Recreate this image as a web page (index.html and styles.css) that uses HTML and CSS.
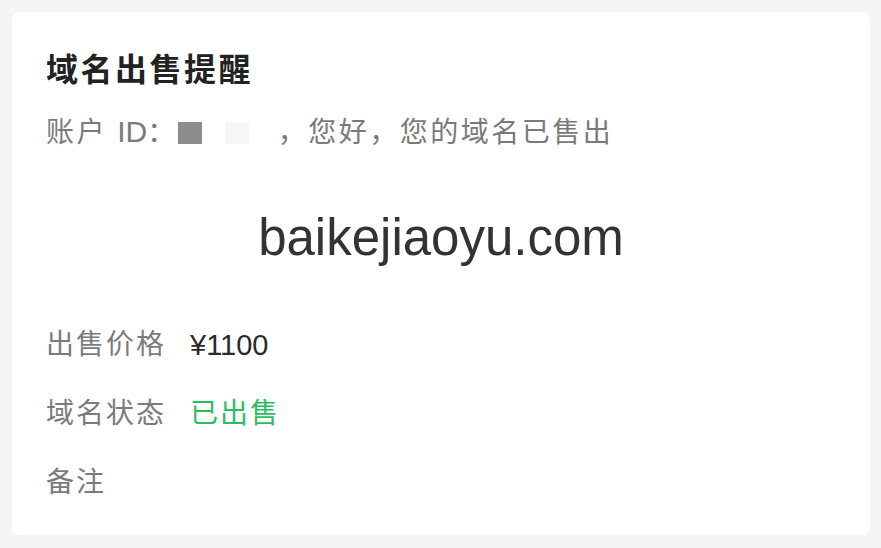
FILE: index.html
```html
<!DOCTYPE html>
<html>
<head>
<meta charset="utf-8">
<title>域名出售提醒</title>
<link rel="stylesheet" href="styles.css">
</head>
<body>
<div class="card">
    <h3 class="title">域名出售提醒</h3>
    <div class="greeting">账户 <span class="latin">ID</span>：<span class="mask dark"></span><span class="mask light"></span>，您好，您的域名已售出</div>
    <div class="domain">baikejiaoyu.com</div>
    <div class="row"><span class="label">出售价格</span><span class="value">¥1100</span></div>
    <div class="row"><span class="label">域名状态</span><span class="value sold">已出售</span></div>
    <div class="row"><span class="label">备注</span></div>
</div>
</body>
</html>
```

FILE: styles.css
```css
html, body {
    margin : 0;
    height : 100%;
    background-color : #f4f5f5;
}
body {
    box-sizing : border-box;
    padding : 12px 11px 13px 12px;
    font-family : "Liberation Sans", "Noto Sans CJK SC", sans-serif;
}
.card {
    height : 100%;
    box-sizing : border-box;
    background-color : #ffffff;
    border-radius : 7px;
    padding : 38px 34px 0 34px;
}
.title {
    margin : 0;
    font-size : 32px;
    line-height : 40px;
    font-weight : bold;
    letter-spacing : 2.5px;
    color : #222222;
}
.greeting {
    margin-top : 22px;
    font-size : 28px;
    line-height : 40px;
    letter-spacing : 2.5px;
    color : #7a7a7a;
}
.greeting .latin {
    font-size : 30px;
    letter-spacing : 0;
}
.mask {
    display : inline-block;
    width : 24px;
    height : 22px;
    vertical-align : -2px;
}
.mask.dark {
    background-color : #8c8c8c;
    margin-left : 0;
}
.mask.light {
    background-color : #f6f6f6;
    margin : 0 29px 0 23px;
}
.domain {
    margin-top : 55px;
    text-align : center;
    font-size : 51px;
    line-height : 60px;
    color : #333333;
}
.row {
    display : grid;
    grid-template-columns : 144px 1fr;
    margin-top : 29px;
    font-size : 28px;
    line-height : 40px;
    color : #7b7b7b;
}
.domain + .row {
    margin-top : 57px;
}
.label {
    letter-spacing : 2px;
}
.value {
    font-size : 29px;
    color : #2a2a2a;
}
.value.sold {
    font-size : 28px;
    color : #2bbd5f;
    letter-spacing : 2px;
}
```
